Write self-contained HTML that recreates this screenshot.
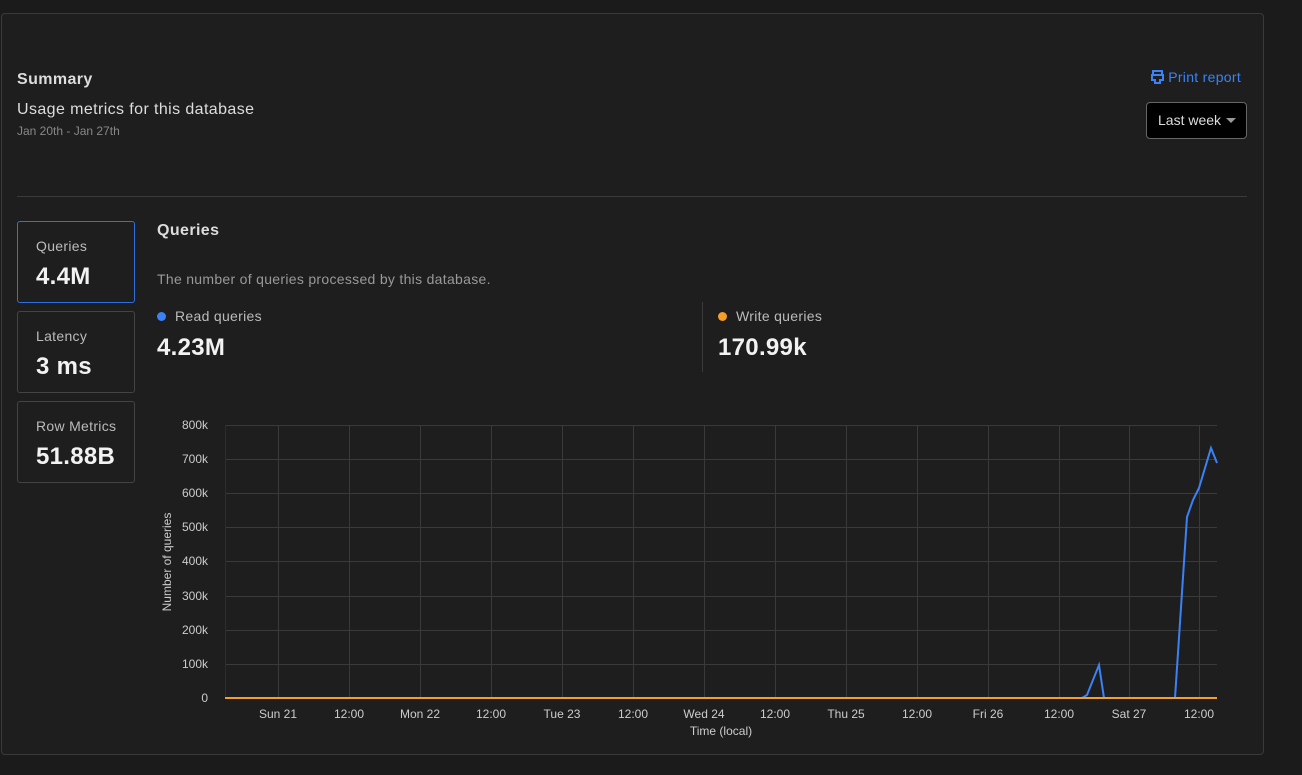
<!DOCTYPE html>
<html><head><style>
body{margin:0;background:#1b1b1b;font-family:"Liberation Sans",sans-serif;width:1302px;height:775px;overflow:hidden;position:relative;color:#e6e6e6}
.card{position:absolute;left:1px;top:13px;width:1261px;height:740px;border:1px solid #3a3a3a;border-radius:4px;background:#1e1e1e}
.a{position:absolute;white-space:nowrap}
.box{position:absolute;left:17px;width:118px;height:82px;border:1px solid #444;border-radius:3px;box-sizing:border-box}
.box .l{position:absolute;left:18px;top:16px;font-size:14px;color:#bbb;letter-spacing:0.3px}
.box .v{position:absolute;left:18px;top:41px;font-size:24px;font-weight:bold;color:#f2f2f2;letter-spacing:0.3px}
</style></head><body>
<div class="card"></div>
<div class="a" style="left:17px;top:71px;font-size:16px;font-weight:bold;color:#ddd;letter-spacing:0.4px">Summary</div>
<div class="a" style="left:17px;top:101px;font-size:16px;color:#ddd;letter-spacing:0.4px">Usage metrics for this database</div>
<div class="a" style="left:17px;top:124px;font-size:12px;color:#888">Jan 20th - Jan 27th</div>
<div class="a" style="left:1151px;top:69px;font-size:14px;color:#3b82f6;letter-spacing:0.3px">
<svg width="13" height="14" viewBox="0 0 13 14" style="vertical-align:-2px"><path d="M2 1h9v4H2z M1 5h11v5H9v3H4v-3H1z" fill="none" stroke="#3b82f6" stroke-width="2"/></svg> Print report</div>
<div class="a" style="left:1146px;top:102px;width:99px;height:35px;border:1px solid #666;border-radius:4px;background:#000;font-size:14px;color:#ddd;line-height:35px"><span style="margin-left:11px">Last week</span><span style="display:inline-block;margin-left:5px;border-left:5px solid transparent;border-right:5px solid transparent;border-top:5px solid #999;vertical-align:2px"></span></div>
<div class="a" style="left:17px;top:196px;width:1230px;height:1px;background:#3a3a3a"></div>
<div class="box" style="top:221px;border-color:#2f6fe0"><div class="l">Queries</div><div class="v">4.4M</div></div>
<div class="box" style="top:311px"><div class="l">Latency</div><div class="v">3 ms</div></div>
<div class="box" style="top:401px"><div class="l">Row Metrics</div><div class="v">51.88B</div></div>
<div class="a" style="left:157px;top:222px;font-size:16px;font-weight:bold;color:#ddd;letter-spacing:0.4px">Queries</div>
<div class="a" style="left:157px;top:271px;font-size:14px;color:#999;letter-spacing:0.3px">The number of queries processed by this database.</div>
<div class="a" style="left:157px;top:308px;font-size:14px;color:#bbb;letter-spacing:0.3px"><span style="display:inline-block;width:9px;height:9px;border-radius:50%;background:#3b82f6;margin-right:9px"></span>Read queries</div>
<div class="a" style="left:157px;top:334px;font-size:24px;font-weight:bold;color:#f2f2f2;letter-spacing:0.3px">4.23M</div>
<div class="a" style="left:702px;top:302px;width:1px;height:70px;background:#3a3a3a"></div>
<div class="a" style="left:718px;top:308px;font-size:14px;color:#bbb;letter-spacing:0.3px"><span style="display:inline-block;width:9px;height:9px;border-radius:50%;background:#f59e2a;margin-right:9px"></span>Write queries</div>
<div class="a" style="left:718px;top:334px;font-size:24px;font-weight:bold;color:#f2f2f2;letter-spacing:0.3px">170.99k</div>
<svg class="a" style="left:0;top:0" width="1302" height="775" font-family="Liberation Sans, sans-serif" font-size="12" fill="#ccc">
<g stroke="#3a3a3a" stroke-width="1">
<line x1="225" y1="425.5" x2="1217" y2="425.5"/><line x1="225" y1="459.5" x2="1217" y2="459.5"/><line x1="225" y1="493.5" x2="1217" y2="493.5"/><line x1="225" y1="527.5" x2="1217" y2="527.5"/><line x1="225" y1="561.5" x2="1217" y2="561.5"/><line x1="225" y1="596.5" x2="1217" y2="596.5"/><line x1="225" y1="630.5" x2="1217" y2="630.5"/><line x1="225" y1="664.5" x2="1217" y2="664.5"/>
<line x1="225.5" y1="425" x2="225.5" y2="698" stroke="#2c2c2c"/>
<line x1="278.5" y1="425" x2="278.5" y2="698"/><line x1="349.5" y1="425" x2="349.5" y2="698"/><line x1="420.5" y1="425" x2="420.5" y2="698"/><line x1="491.5" y1="425" x2="491.5" y2="698"/><line x1="562.5" y1="425" x2="562.5" y2="698"/><line x1="633.5" y1="425" x2="633.5" y2="698"/><line x1="704.5" y1="425" x2="704.5" y2="698"/><line x1="775.5" y1="425" x2="775.5" y2="698"/><line x1="846.5" y1="425" x2="846.5" y2="698"/><line x1="917.5" y1="425" x2="917.5" y2="698"/><line x1="988.5" y1="425" x2="988.5" y2="698"/><line x1="1059.5" y1="425" x2="1059.5" y2="698"/><line x1="1129.5" y1="425" x2="1129.5" y2="698"/><line x1="1199.5" y1="425" x2="1199.5" y2="698"/>
</g>
<g text-anchor="end"><text x="208" y="429">800k</text><text x="208" y="463">700k</text><text x="208" y="497">600k</text><text x="208" y="531">500k</text><text x="208" y="565">400k</text><text x="208" y="600">300k</text><text x="208" y="634">200k</text><text x="208" y="668">100k</text><text x="208" y="702">0</text></g>
<g text-anchor="middle"><text x="278" y="718">Sun 21</text><text x="349" y="718">12:00</text><text x="420" y="718">Mon 22</text><text x="491" y="718">12:00</text><text x="562" y="718">Tue 23</text><text x="633" y="718">12:00</text><text x="704" y="718">Wed 24</text><text x="775" y="718">12:00</text><text x="846" y="718">Thu 25</text><text x="917" y="718">12:00</text><text x="988" y="718">Fri 26</text><text x="1059" y="718">12:00</text><text x="1129" y="718">Sat 27</text><text x="1199" y="718">12:00</text>
<text x="721" y="735">Time (local)</text></g>
<text transform="translate(171,562) rotate(-90)" text-anchor="middle">Number of queries</text>
<polyline fill="none" stroke="#3b82f6" stroke-width="2" points="225,698 1082,698 1087,695 1099,665 1104,698 1175,698 1187,517 1193,500 1199,488 1211,448 1217,463"/>
<polyline fill="none" stroke="#f59e2a" stroke-width="2" points="225,698 1217,698"/>
</svg>
</body></html>
